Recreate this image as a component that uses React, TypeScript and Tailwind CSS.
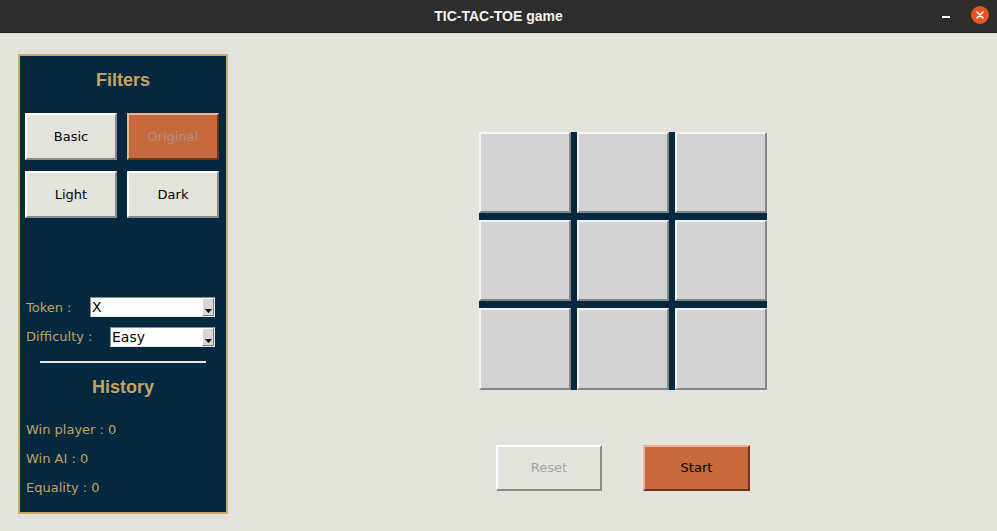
const gold = 'text-[#c6a25f]';

function FilterButton({ label, active }: { label: string; active?: boolean }) {
  if (active) {
    return (
      <div className="w-[92px] h-[47px] flex items-center justify-center bg-[#c66a3e] border-2 border-t-[#eab39b] border-l-[#eab39b] border-b-[#6e3318] border-r-[#6e3318] text-[13px] text-[#a89084]">
        {label}
      </div>
    );
  }
  return (
    <div className="w-[92px] h-[47px] flex items-center justify-center bg-[#e4e3db] border-2 border-t-white border-l-white border-b-[#8a8a86] border-r-[#8a8a86] text-[13px] text-black">
      {label}
    </div>
  );
}

function Combo({ value, width }: { value: string; width: number }) {
  return (
    <div
      className="h-[20px] flex bg-white border border-t-[#8c8c8c] border-l-[#8c8c8c] border-b-[#e6e6e6] border-r-[#e6e6e6]"
      style={{ width }}
    >
      <div className="flex-1 pl-[1px] text-[14px] leading-[18px] text-black">{value}</div>
      <div className="w-[12px] h-[18px] bg-[#d6d6d4] border border-t-white border-l-white border-b-[#7d7d7d] border-r-[#7d7d7d] flex items-end justify-center pb-[2px]">
        <svg width="7" height="4" viewBox="0 0 7 4">
          <path d="M0 0 L7 0 L3.5 4 Z" fill="#000" />
        </svg>
      </div>
    </div>
  );
}

function Sidebar() {
  return (
    <div className="w-[210px] h-[460px] border-2 border-[#c9a869] bg-[#04283f] flex flex-col font-['DejaVu_Sans',sans-serif]">
      <div className={`h-[46px] pt-[11px] text-center font-['Liberation_Sans',sans-serif] font-bold text-[18px] ${gold}`}>
        Filters
      </div>
      <div className="grid grid-cols-[92px_92px] gap-x-[10px] gap-y-[11px] pl-[5px] mt-[11px]">
        <FilterButton label="Basic" />
        <FilterButton label="Original" active />
        <FilterButton label="Light" />
        <FilterButton label="Dark" />
      </div>
      <div className="mt-[79px] pl-[6px] flex items-center">
        <span className={`text-[13px] w-[64px] translate-y-[1px] ${gold}`}>Token :</span>
        <Combo value="X" width={125} />
      </div>
      <div className="mt-[10px] pl-[6px] flex items-center">
        <span className={`text-[13px] w-[84px] ${gold}`}>Difficulty :</span>
        <Combo value="Easy" width={105} />
      </div>
      <div className="mt-[14px] ml-[20px] w-[166px] h-[2px] bg-[#e6e6e6]" />
      <div className={`mt-[11px] text-center font-['Liberation_Sans',sans-serif] font-bold text-[18px] ${gold}`}>
        History
      </div>
      <div className={`mt-[21px] pl-[6px] flex flex-col gap-[13px] text-[13px] ${gold}`}>
        <span className="leading-[16px]">Win player : 0</span>
        <span className="leading-[16px]">Win AI : 0</span>
        <span className="leading-[16px]">Equality : 0</span>
      </div>
    </div>
  );
}

function Board() {
  const cells = Array.from({ length: 9 });
  return (
    <div className="grid grid-cols-[92px_92px_92px] grid-rows-[81px_81px_82px] gap-x-[6px] gap-y-[7px] bg-[#04283f] w-[288px] h-[258px]">
      {cells.map((_, i) => (
        <div
          key={i}
          className="bg-[#d3d3d3] border-2 border-t-[#f4f4f4] border-l-[#f4f4f4] border-b-[#858585] border-r-[#858585]"
        />
      ))}
    </div>
  );
}

export default function App() {
  return (
    <div className="w-[997px] h-[531px] bg-[#e4e3db] overflow-hidden font-['DejaVu_Sans',sans-serif]">
      <div className="h-[33px] bg-[#2f2c2c] relative flex items-center justify-center border-b border-[#1f1d1d]">
        <span className="font-['Liberation_Sans',sans-serif] font-bold text-[14px] text-[#f3f3f3]">
          TIC-TAC-TOE game
        </span>
        <div className="absolute left-[942px] top-[16px] w-[8px] h-[1.5px] bg-white" />
        <div className="absolute left-[971px] top-[6px] w-[18px] h-[18px] rounded-full bg-[#e95420] flex items-center justify-center">
          <svg width="8" height="8" viewBox="0 0 8 8">
            <path d="M1 1 L7 7 M7 1 L1 7" stroke="#fff" strokeWidth="1.6" strokeLinecap="round" />
          </svg>
        </div>
      </div>
      <div className="flex pl-[18px] pt-[21px]">
        <Sidebar />
        <div className="ml-[251px] pt-[78px] flex flex-col">
          <Board />
          <div className="flex mt-[55px] ml-[17px] gap-[41px] text-[13px]">
            <div className="w-[106px] h-[46px] flex items-center justify-center bg-[#e4e3db] border-2 border-t-white border-l-white border-b-[#8a8a86] border-r-[#8a8a86] text-[#a5a5a3]">
              Reset
            </div>
            <div className="w-[107px] h-[46px] flex items-center justify-center bg-[#c66a3e] border-2 border-t-[#eab39b] border-l-[#eab39b] border-b-[#6e3318] border-r-[#6e3318] text-black">
              Start
            </div>
          </div>
        </div>
      </div>
    </div>
  );
}
